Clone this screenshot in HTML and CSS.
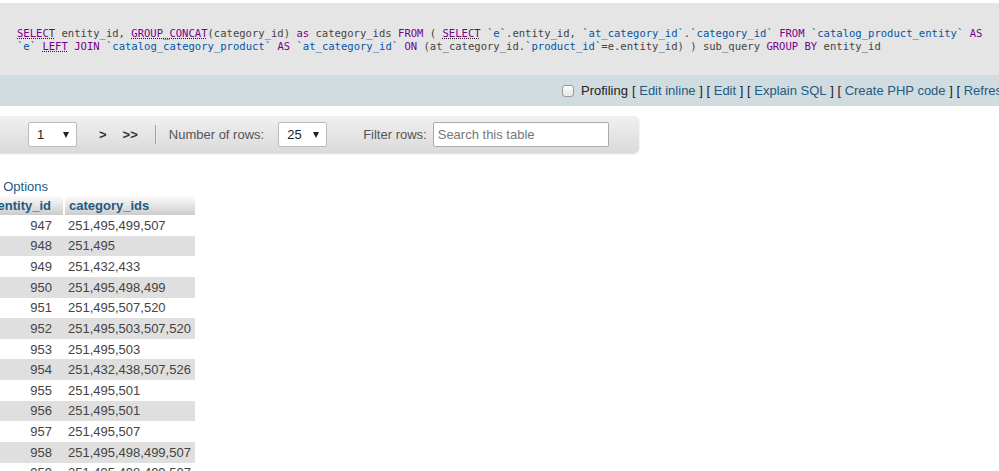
FILE: index.html
```html
<!DOCTYPE html>
<html>
<head>
<meta charset="utf-8">
<link rel="stylesheet" href="styles.css">
</head>
<body>
<div class="sql"><div class="line"><a class="kw lk">SELECT</a> entity_id, <a class="kw lk">GROUP_CONCAT</a>(category_id) <span class="kw">as</span> category_ids <span class="kw">FROM</span> ( <a class="kw lk">SELECT</a> <span class="id">`e`</span>.entity_id, <span class="id">`at_category_id`</span>.<span class="id">`category_id`</span> <span class="kw">FROM</span> <span class="id">`catalog_product_entity`</span> <span class="kw">AS</span></div><div class="line"><span class="id">`e`</span> <a class="kw lk">LEFT</a> <span class="kw">JOIN</span> <span class="id">`catalog_category_product`</span> <span class="kw">AS</span> <span class="id">`at_category_id`</span> <span class="kw">ON</span> (at_category_id.<span class="id">`product_id`</span>=e.entity_id) ) sub_query <span class="kw">GROUP BY</span> entity_id</div></div>
<div class="tools">
  <span class="check"></span>
  <span class="prof">Profiling</span>
  <span class="br">[</span>&nbsp;<a class="lnk">Edit inline</a>&nbsp;<span class="br">]</span>&nbsp;<span class="br">[</span>&nbsp;<a class="lnk">Edit</a>&nbsp;<span class="br">]</span>&nbsp;<span class="br">[</span>&nbsp;<a class="lnk">Explain SQL</a>&nbsp;<span class="br">]</span>&nbsp;<span class="br">[</span>&nbsp;<a class="lnk">Create PHP code</a>&nbsp;<span class="br">]</span>&nbsp;<span class="br">[</span>&nbsp;<a class="lnk">Refresh</a>&nbsp;<span class="br">]</span>
</div>
<div class="nav">
  <div class="select s1"><span>1</span><i class="arr"></i></div>
  <span class="btn b1">&gt;</span>
  <span class="btn b2">&gt;&gt;</span>
  <span class="sep"></span>
  <span class="lbl l1">Number of rows:</span>
  <div class="select s2"><span>25</span><i class="arr"></i></div>
  <span class="lbl l2">Filter rows:</span>
  <div class="search">Search this table</div>
</div>
<div class="options"><a class="lnk">+ Options</a></div>
<table class="data">
  <thead><tr><th class="c1">entity_id</th><th class="c2">category_ids</th></tr></thead>
  <tbody>
    <tr class="odd"><td class="c1">947</td><td class="c2">251,495,499,507</td></tr>
    <tr class="even"><td class="c1">948</td><td class="c2">251,495</td></tr>
    <tr class="odd"><td class="c1">949</td><td class="c2">251,432,433</td></tr>
    <tr class="even"><td class="c1">950</td><td class="c2">251,495,498,499</td></tr>
    <tr class="odd"><td class="c1">951</td><td class="c2">251,495,507,520</td></tr>
    <tr class="even"><td class="c1">952</td><td class="c2">251,495,503,507,520</td></tr>
    <tr class="odd"><td class="c1">953</td><td class="c2">251,495,503</td></tr>
    <tr class="even"><td class="c1">954</td><td class="c2">251,432,438,507,526</td></tr>
    <tr class="odd"><td class="c1">955</td><td class="c2">251,495,501</td></tr>
    <tr class="even"><td class="c1">956</td><td class="c2">251,495,501</td></tr>
    <tr class="odd"><td class="c1">957</td><td class="c2">251,495,507</td></tr>
    <tr class="even"><td class="c1">958</td><td class="c2">251,495,498,499,507</td></tr>
    <tr class="odd"><td class="c1">959</td><td class="c2">251,495,498,499,507</td></tr>
  </tbody>
</table>
</body>
</html>
```
FILE: styles.css
```css
html, body {
  margin: 0;
  padding: 0;
}
body {
  width: 999px;
  height: 471px;
  overflow: hidden;
  background: #fff;
  font-family: "Liberation Sans", Arial, sans-serif;
  font-size: 13px;
  color: #444;
}
a { cursor: pointer; }

.sql {
  margin-top: 3px;
  height: 72px;
  box-sizing: border-box;
  padding: 24px 0 0 17px;
  background: #e5e5e5;
  font-family: "DejaVu Sans Mono", monospace;
  font-size: 10.56px;
  line-height: 13px;
  color: #444;
  white-space: pre;
}
.sql .kw { color: #770088; }
.sql .id { color: #0055aa; }
.sql .lk {
  text-decoration: underline dotted #222;
  text-underline-offset: 1px;
}

.tools {
  height: 31px;
  box-sizing: border-box;
  background: #d0dce0;
  display: flex;
  align-items: center;
  padding-left: 562px;
  white-space: nowrap;
  color: #222;
}
.check {
  flex: none;
  width: 10px;
  height: 10px;
  border: 1px solid #999;
  border-radius: 3px;
  background: linear-gradient(#fff, #e4e4e4);
  margin-right: 7px;
}
.prof { color: #222; margin-right: 4px; }
.br { color: #222; }
.lnk { color: #235a81; text-decoration: none; }

.nav {
  margin-top: 10px;
  margin-left: -10px;
  width: 649px;
  height: 37px;
  box-sizing: border-box;
  border-radius: 0 5px 5px 0;
  background: linear-gradient(#f0f0f0, #dadada);
  box-shadow: 0 1px 2px rgba(0,0,0,0.15);
  display: flex;
  align-items: center;
  color: #555;
}
.select {
  position: relative;
  height: 25px;
  box-sizing: border-box;
  border: 1px solid #bbb;
  border-radius: 2px;
  background: #fff;
  color: #222;
  display: flex;
  align-items: center;
  padding-left: 8px;
}
.s1 { width: 49px; margin-left: 38px; }
.s2 { width: 49px; margin-left: 14px; }
.arr {
  position: absolute;
  right: 7px;
  top: 9px;
  width: 0;
  height: 0;
  border-left: 3px solid transparent;
  border-right: 3px solid transparent;
  border-top: 6px solid #222;
}
.btn {
  font-weight: bold;
  color: #333;
}
.b1 { margin-left: 22px; }
.b2 { margin-left: 16px; }
.sep {
  width: 1px;
  height: 19px;
  background: #a89f98;
  border-right: 1px solid #eee;
  margin-left: 17px;
}
.l1 { margin-left: 12px; }
.l2 { margin-left: 36px; }
.search {
  margin-left: 6px;
  width: 176px;
  height: 25px;
  box-sizing: border-box;
  border: 1px solid #aaa;
  border-radius: 2px;
  background: #fff;
  color: #777;
  padding-left: 4px;
  line-height: 23px;
}

.options {
  margin-top: 26px;
  margin-left: -8px;
  line-height: 16px;
  height: 16px;
}

.data {
  margin-left: -24px;
  border-collapse: collapse;
}
.data th, .data td {
  padding: 0 4px;
  white-space: nowrap;
}
.data th {
  height: 20px;
  background: linear-gradient(#fff, #ccc);
  color: #235a81;
  font-weight: bold;
  text-align: left;
}
.data th.c1 { text-align: right; border-right: 2px solid #fff; }
.data .c1 { width: 71px; padding-right: 12px; text-align: right; }
.data td { height: 20.64px; line-height: 15px; color: #444; }
.data tr.even td { background: #dfdfdf; }
.data tr.odd td { background: #fff; }
```
